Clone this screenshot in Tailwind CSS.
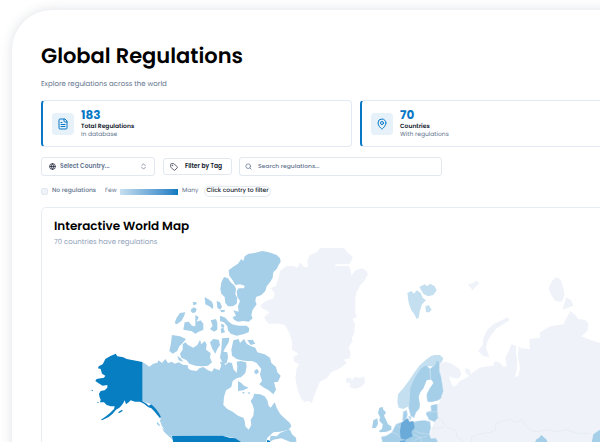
<!DOCTYPE html>
<html lang="en">
<head>
  <meta charset="UTF-8" />
  <meta name="viewport" content="width=device-width, initial-scale=1.0"/>
  <title>Global Regulations</title>
  <script src="https://cdn.jsdelivr.net/npm/@tailwindcss/browser@4"></script>
</head>
<body class="bg-white min-h-screen overflow-hidden [font-family:Poppins,Inter,sans-serif] [text-rendering:geometricPrecision] text-slate-900">

  <!-- Panel, runs past the right and bottom edges -->
  <main class="mt-[10px] ml-3 -mr-[100px] px-[29px] pt-[33px] bg-white rounded-tl-[40px] shadow-[0_0_12px_rgba(71,85,105,0.18)]">
    <h1 class="text-[21px] leading-7 font-semibold text-black">Global Regulations</h1>
    <p class="mt-2 text-[7px] leading-[11px] text-slate-500">Explore regulations across the world</p>

    <!-- Stats -->
    <section class="mt-[10px] grid grid-cols-2 gap-2">
      <div class="h-[47px] flex items-center gap-[7px] pl-[9px] border border-[#e1eaf4] border-l-2 border-l-[#0878c6] rounded">
        <div class="size-[22px] flex items-center justify-center rounded bg-[#e6f1fa] text-[#0878c6]">
          <svg class="size-3" viewBox="0 0 24 24" fill="none" stroke="currentColor" stroke-width="2" stroke-linecap="round" stroke-linejoin="round"><path d="M15 2H6a2 2 0 0 0-2 2v16a2 2 0 0 0 2 2h12a2 2 0 0 0 2-2V7Z"/><path d="M14 2v4a2 2 0 0 0 2 2h4M10 9H8M16 13H8M16 17H8"/></svg>
        </div>
        <div>
          <p class="text-[12px] leading-[14px] font-bold text-[#0878c6]">183</p>
          <p class="text-[6px] leading-[9px] font-semibold">Total Regulations</p>
          <p class="text-[6px] leading-[7px] text-slate-500">In database</p>
        </div>
      </div>
      <div class="h-[47px] flex items-center gap-[7px] pl-[9px] border border-[#e1eaf4] border-l-2 border-l-[#0878c6] rounded">
        <div class="size-[22px] flex items-center justify-center rounded bg-[#e6f1fa] text-[#0878c6]">
          <svg class="size-3" viewBox="0 0 24 24" fill="none" stroke="currentColor" stroke-width="2" stroke-linecap="round" stroke-linejoin="round"><path d="M20 10c0 5-5.5 10.2-7.4 11.8a1 1 0 0 1-1.2 0C9.500 20.200 4 15 4 10a8 8 0 0 1 16 0"/><circle cx="12" cy="10" r="3"/></svg>
        </div>
        <div>
          <p class="text-[12px] leading-[14px] font-bold text-[#0878c6]">70</p>
          <p class="text-[6px] leading-[9px] font-semibold">Countries</p>
          <p class="text-[6px] leading-[7px] text-slate-500">With regulations</p>
        </div>
      </div>
    </section>

    <!-- Filters -->
    <section class="mt-[10px] flex items-center text-[7px]">
      <div class="relative w-[114px] h-[19px]">
        <svg class="absolute left-2 top-[6px] size-[7px]" viewBox="0 0 24 24" fill="none" stroke="currentColor" stroke-width="2.500"><circle cx="12" cy="12" r="10"/><path d="M12 2a15 15 0 0 0 0 20 15 15 0 0 0 0-20M2 12h20"/></svg>
        <select aria-label="Select country" class="size-full appearance-none pl-[18px] border border-slate-200 rounded-[3px] text-[6px] font-semibold text-slate-500">
          <option>Select Country...</option>
        </select>
        <svg class="absolute right-2 top-[6px] size-[7px] text-slate-500 pointer-events-none" viewBox="0 0 24 24" fill="none" stroke="currentColor" stroke-width="2.500" stroke-linecap="round" stroke-linejoin="round"><path d="m6 9 6-6 6 6M6 15l6 6 6-6"/></svg>
      </div>
      <button class="ml-2 w-[69px] h-[17px] flex items-center gap-[7px] pl-[6px] border border-slate-200 rounded-[3px] text-[6px] font-semibold whitespace-nowrap">
        <svg class="size-2" viewBox="0 0 24 24" fill="none" stroke="currentColor" stroke-width="2" stroke-linejoin="round"><path d="M12.600 2.600A2 2 0 0 0 11.200 2H4a2 2 0 0 0-2 2v7.200a2 2 0 0 0 .6 1.400l8.700 8.700a2.400 2.400 0 0 0 3.400 0l6.600-6.600a2.400 2.400 0 0 0 0-3.400z"/><circle cx="7.500" cy="7.500" r="1"/></svg>
        Filter by Tag
      </button>
      <div class="relative ml-[7px] w-[203px] h-[19px]">
        <svg class="absolute left-[6px] top-[6px] size-[7px] text-slate-500" viewBox="0 0 24 24" fill="none" stroke="currentColor" stroke-width="2.500" stroke-linecap="round"><circle cx="11" cy="11" r="8"/><path d="m21 21-4-4"/></svg>
        <input type="text" aria-label="Search regulations" placeholder="Search regulations..." class="size-full pl-[18px] border border-slate-200 rounded-[3px] text-[6px] placeholder:text-slate-500 font-medium">
      </div>
    </section>

    <!-- Legend -->
    <section class="mt-[9px] h-[13px] flex items-center text-[6px] text-slate-500">
      <span class="size-[7px] rounded-[2px] bg-[#eff3f9] border border-slate-200"></span>
      <span class="ml-1 w-[46px] font-medium whitespace-nowrap">No regulations</span>
      <span class="ml-[7px] w-3">Few</span>
      <span class="ml-[3px] w-[58px] h-[6px] bg-linear-to-r from-[#c5dff0] to-[#067bc0]"></span>
      <span class="ml-1 w-[15px]">Many</span>
      <span class="ml-[7px] h-[11px] w-[67px] flex items-center justify-center border border-slate-200 rounded-full font-medium text-slate-900 whitespace-nowrap">Click country to filter</span>
    </section>

    <!-- Map -->
    <section class="mt-[9px] border border-[#e8edf4] rounded-[5px]">
      <div class="px-3 pt-[9px]">
        <h2 class="text-[12px] leading-5 font-semibold text-black">Interactive World Map</h2>
        <p class="mt-px text-[7px] leading-[9px] text-slate-400">70 countries have regulations</p>
      </div>
      <svg class="block w-full" viewBox="0 0 1884 606" role="img" aria-label="World map of regulations" stroke-linejoin="round">
        <!-- North America -->
        <g transform="translate(114 -18)" fill="#a5cee8">
          <path d="M186 363L196 368 208 377 220 368 232 365 236 358 246 366 256 354 264 366 276 362 284 368 296 364 310 372 322 372 326 384 334 388 350 390 358 382 370 378 384 388 396 392 402 382 418 388 424 374 420 362 428 364 436 372 446 364 456 366 460 384 470 396 472 376 470 362 482 360 498 364 500 376 496 396 484 408 470 412 458 420 454 438 438 448 432 468 430 492 442 504 458 512 474 524 490 530 494 540 496 556 506 566 514 552 512 536 520 524 522 506 518 492 512 480 520 468 522 458 540 460 554 466 562 478 566 494 572 500 584 484 590 500 600 518 612 530 630 546 634 556 626 566 600 572 580 574 562 590 554 612 484 612 466 592 428 584 276 586 260 575 246 556 240 540 243 528 230 506 214 490 186 481Z"/>
          <path d="M546 30L560 32 574 36 590 42 600 52 602 62 596 72 590 84 580 94 578 110 570 124 560 136 556 150 544 162 528 168 526 180 530 190 518 206 514 222 518 232 506 242 490 240 474 242 462 236 458 228 468 224 460 208 476 212 474 196 480 180 472 168 470 150 476 142 492 142 494 134 480 130 466 132 458 118 448 104 446 88 462 76 474 68 484 54 490 60 494 46 506 38 524 36Z"/>
          <path d="M432 108L444 112 452 124 464 134 468 144 466 160 472 172 470 188 458 196 444 196 436 186 434 168 424 158 421 144 424 124Z"/>
          <path d="M420 224L436 230 444 240 456 250 476 254 500 254 508 262 506 274 490 280 470 284 452 278 444 268 442 256 432 244 420 240Z"/>
          <path d="M374 168L384 174 396 182 400 194 398 204 388 196 376 190ZM410 180L420 184 426 198 420 206 412 200ZM420 208L434 206 434 213 424 214ZM338 184L349 183 350 190 340 193ZM334 204L342 199 350 204 347 214 338 216 332 210ZM300 216L316 214 312 226 304 240 290 250 284 246 290 230Z"/>
          <path d="M346 222L356 228 350 242 362 238 370 248 370 266 356 272 346 278 334 270 318 268 310 266 314 244 326 242 336 254 346 256ZM392 238L408 234 412 246 412 266 402 272 390 264 398 254ZM423 248L433 252 432 260 424 259ZM422 263L430 260 435 274 424 277Z"/>
          <path d="M276 282L300 286 318 294 308 306 298 316 292 330 278 338 268 330 272 312Z"/>
          <path d="M308 310L316 304 324 312 340 320 352 312 360 296 364 310 374 300 380 310 378 326 392 336 390 350 396 364 384 374 366 376 346 374 328 368 320 358 304 350 300 338 308 326ZM292 344L302 352 310 362 296 358Z"/>
          <path d="M400 294L416 296 420 312 412 324 406 338 396 322 390 304ZM426 292L448 290 446 304 436 320 430 332 442 334 444 350 440 366 430 370 420 350 424 326Z"/>
          <path d="M460 298L476 294 480 306 492 294 500 308 510 314 526 320 532 334 554 340 570 350 574 366 588 378 592 394 602 404 594 422 582 424 588 446 580 460 566 448 552 440 538 430 546 420 540 400 544 384 530 366 516 360 500 360 484 358 470 354 456 344 454 326ZM502 298L518 296 526 308 512 312Z"/>
          <path d="M524 388L532 384 537 392 530 400 523 396ZM474 420L484 426 492 434 506 440 490 448 474 450ZM486 454L494 452 492 459ZM502 456L508 452 510 460ZM232 542L240 552 238 556 230 548ZM246 560L262 572 276 588 280 598 266 586 252 572Z"/>
          <path d="M572 584L590 586 600 576 620 568 630 566 636 580 648 590 650 612 624 600 604 592 580 596 568 604Z"/>
          <g fill="#077dc2">
            <path d="M107 338L112 346 130 349 140 354 160 358 187 363 187 481 200 488 206 494 214 490 222 497 230 506 238 518 243 528 240 532 232 522 222 510 214 502 204 498 192 488 180 482 165 482 152 478 146 484 138 490 134 478 130 486 124 494 118 500 108 506 98 518 86 528 66 538 63 536 78 526 90 516 102 504 104 496 92 496 80 492 72 484 60 484 62 476 58 466 57 458 62 450 74 448 82 440 82 432 68 434 58 428 46 420 50 414 62 412 72 410 76 404 66 398 62 384 54 382 56 376 68 370 72 362 76 354 90 346ZM34 446L40 448 36 451ZM52 482L57 484 53 487ZM114 514L126 506 128 510 118 516Z"/>
            <path d="M276 585L428 584 448 590 466 592 484 604 500 612 500 640 270 640 280 606ZM558 612L562 596 570 600 570 620Z"/>
          </g>
        </g>

        <!-- Greenland, Iceland -->
        <g transform="translate(564 -18)" fill="#eff3f9">
          <path d="M270 21L342 21 352 34 368 48 362 64 356 70 318 70 314 76 356 74 362 86 364 104 376 88 394 82 408 88 414 100 404 118 390 134 380 152 376 172 376 212 380 228 368 234 375 250 373 276 366 290 368 300 356 318 362 336 360 352 342 356 350 366 330 382 304 394 290 412 270 422 262 440 252 466 246 486 234 480 224 484 212 470 202 444 196 410 200 382 208 370 192 362 190 346 204 342 200 334 186 328 186 300 178 276 164 252 146 248 116 248 102 230 118 214 94 200 92 192 108 180 130 172 134 156 122 142 138 134 146 108 150 90 168 76 190 74 202 80 210 64 222 78 234 78 232 60 240 42 262 32Z"/>
          <path d="M348 412L362 410 366 418 374 408 390 410 402 406 406 424 396 436 376 444 358 438 362 428 348 424Z"/>
        </g>

        <!-- Europe and Russia -->
        <g transform="translate(1074 -18)" fill="#a5cee8">
          <g fill="#eff3f9">
            <path d="M118 366L140 362 158 370 180 386 184 400 176 412 160 412 148 406 152 422 160 438 170 432 180 420 196 412 208 404 196 396 196 380 210 386 212 400 224 390 240 380 262 376 280 374 284 360 300 366 312 378 320 374 316 350 326 330 334 310 348 314 348 340 352 360 350 390 344 410 356 402 360 380 354 350 356 314 364 322 390 324 388 294 420 290 420 274 450 256 490 250 500 230 512 210 528 224 534 234 556 236 566 250 562 270 544 286 570 296 600 306 820 320 820 640 110 640 110 592 88 588 96 562 104 540 114 528 114 490 124 474 132 450 126 410 118 390Z"/>
            <path d="M234 330L248 312 250 290 262 266 280 250 300 240 324 229 328 238 310 250 290 262 272 284 262 302 258 320 268 348 250 346ZM468 108L482 116 490 140 494 160 486 182 466 180 452 160 446 140 456 120ZM498 168L514 178 520 194 488 206ZM204 130L220 126 230 118 238 128 228 136 218 148 208 136Z"/>
          </g>
          <path d="M112 530L126 536 132 550 146 562 168 568 172 590 190 600M88 562L132 560M216 606L214 590 240 578 270 574 286 568 288 548 310 540 330 536 352 544 366 536 378 556 400 572 424 570 440 566 470 572 500 566 530 576 572 578" fill="none" stroke="#e3e9f1" stroke-width="2"/>
          <g fill="#c4e0f0">
            <path d="M22 156L34 150 42 158 50 148 62 156 68 170 78 178 66 190 60 208 56 230 50 234 42 218 34 208 26 186ZM58 138L74 130 82 136 90 128 104 136 110 148 100 162 84 166 70 158ZM76 196L86 192 95 206 88 214 78 214Z"/>
            <path d="M130 352L120 342 104 342 92 346 76 358 58 374 42 396 26 420 10 442 -6 460 -8 484 -4 500 10 504 26 496 36 480 36 440 46 410 64 386 84 376 104 376 126 362Z"/>
          </g>
          <g stroke="#c8e1f1" stroke-width="2">
            <path d="M62 382L78 372 90 384 92 416 80 420 70 444 58 462 60 480 60 500 48 514 42 530 32 524 26 500 28 470 30 440 42 412Z"/>
            <path d="M90 384L104 372 110 358 118 362 118 390 124 410 130 450 122 474 100 484 82 482 80 460 90 440 100 426 92 414Z"/>
            <path d="M92 492L112 490 112 510 114 530 104 542 92 538 78 530 78 514 94 510ZM80 514L112 512"/>
            <path d="M-56 588L-40 584 -24 574 -12 550 4 544 40 544 66 536 90 542 92 560 88 580 92 592 108 592 114 606 114 640 -44 640Z"/>
            <path d="M44 570L60 576 88 580M40 580L60 590 80 586M-24 574L-8 580 2 592M40 600L60 590 70 612M-10 552L0 560" fill="none"/>
            <path d="M8 540L10 512 20 508 22 522 18 538ZM26 526L34 528 30 538Z"/>
          </g>
          <path d="M-62 500L-52 498 -50 506 -42 514 -48 524 -42 536 -36 550 -26 556 -26 566 -40 572 -58 574 -64 570 -54 564 -52 550 -62 540 -60 528 -66 516ZM-80 538L-68 532 -66 548 -72 560 -84 562Z"/>
          <path d="M14 538L24 532 28 542 40 540 44 560 34 572 38 586 16 596 2 592 0 570 4 546ZM0 600L16 598 18 612 0 612Z" fill="#69aad9"/>
          <path d="M402 610L410 594 416 592 424 582 440 596 444 610ZM574 610L580 580 600 566 620 560 640 610Z"/>
          <path d="M80 418C94 412 104 424 94 434C84 446 78 458 78 470L84 486 108 480 114 484 92 494 80 506 78 520 86 532 72 538 50 540 42 536 46 524 58 508 60 490 56 468 62 452 72 440Z" fill="#fff"/>
        </g>
      </svg>
    </section>
  </main>

</body>
</html>
